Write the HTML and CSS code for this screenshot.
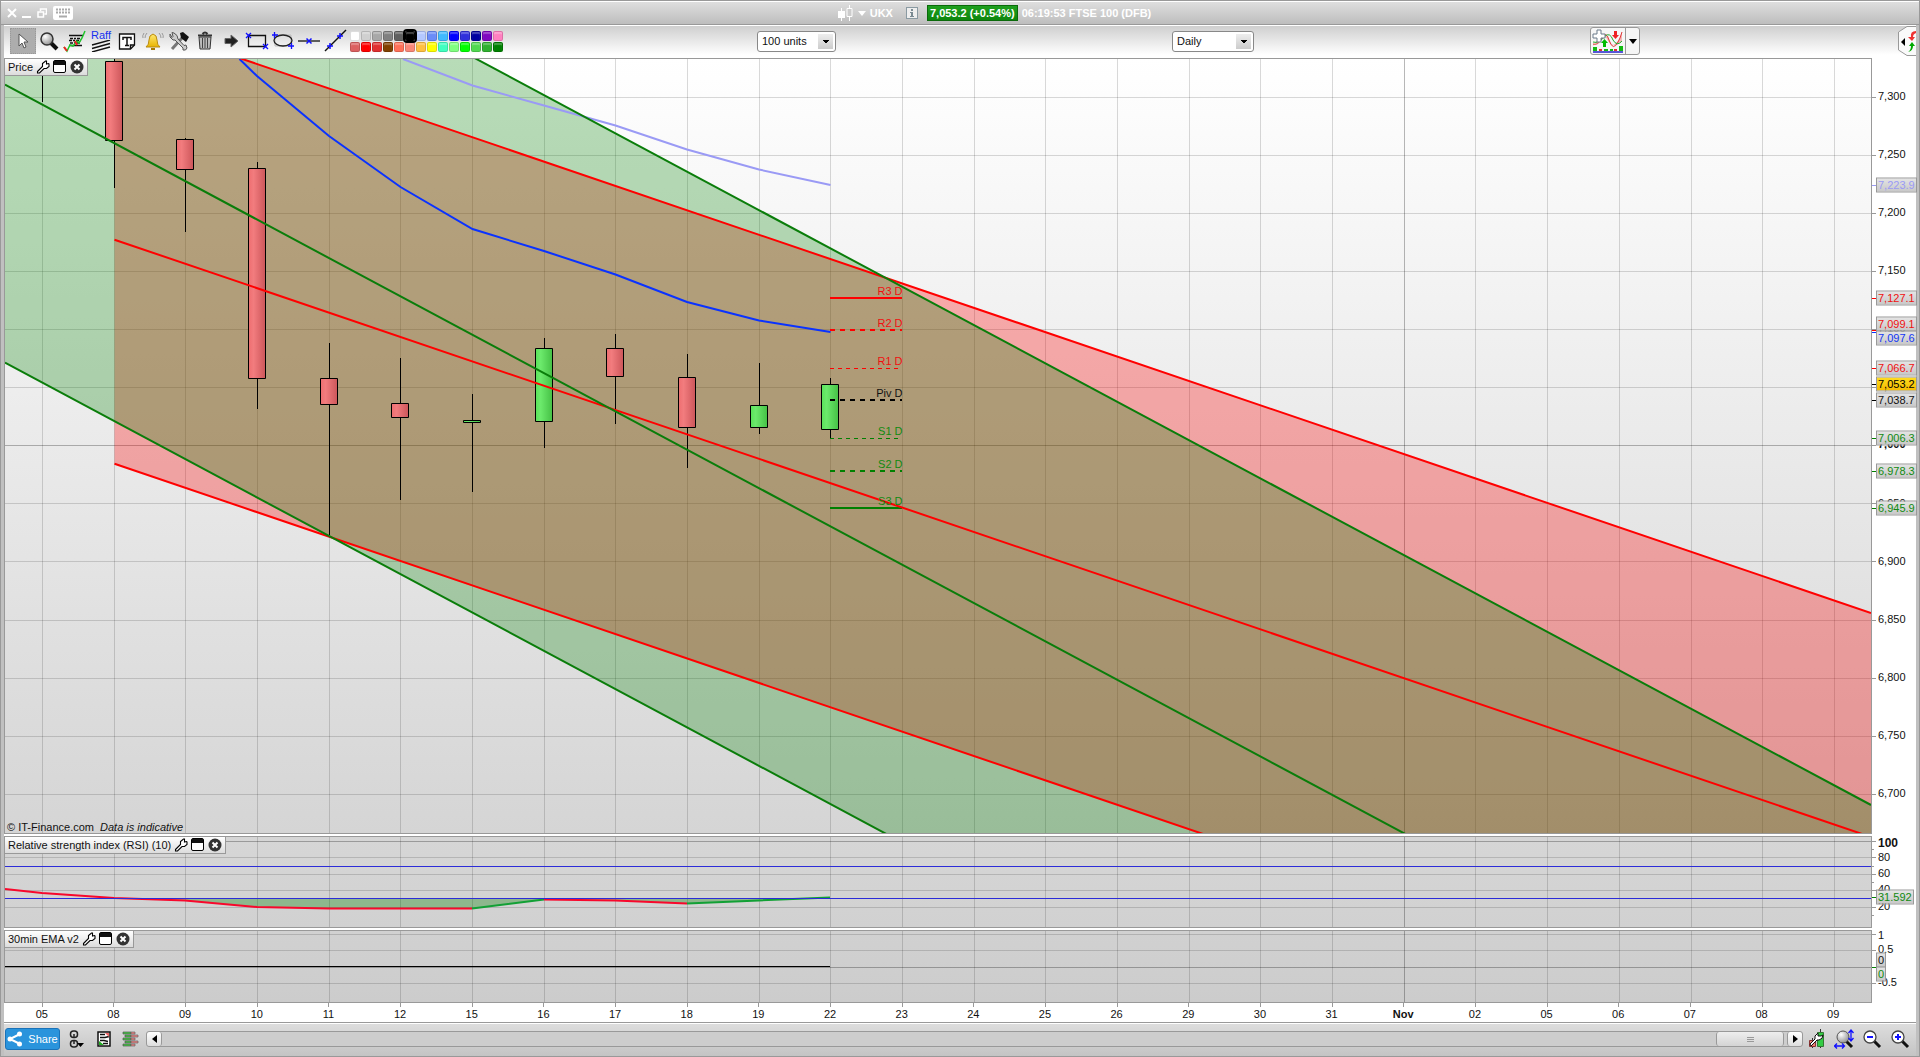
FILE: index.html
```html
<!DOCTYPE html>
<html lang="en">
<head>
<meta charset="utf-8">
<title>UKX - FTSE 100 (DFB)</title>
<link rel="stylesheet" href="styles.css">
</head>
<body>
<svg class="defs" aria-hidden="true">
  <symbol id="wrench" viewBox="0 0 14 14"><path d="M1.5 11.5 6.500 6.500V3.500L9.500 1h1v3l2-0.500.5.5v2.500L10.500 8.500H8L3.500 13H1.500z" fill="#fff" stroke="#000" stroke-width="1.100"/></symbol>
  <symbol id="window" viewBox="0 0 14 14"><rect x=".5" y=".5" width="12" height="12" rx="1.500" fill="#fff" stroke="#000"/><path d="M1 1h11v4H1z" fill="#111"/></symbol>
  <symbol id="close" viewBox="0 0 14 14"><circle cx="7" cy="7" r="6.500" fill="#333"/><path d="m4.500 4.500 5 5m0-5-5 5" stroke="#fff" stroke-width="2"/></symbol>
  <linearGradient id="up"><stop offset="0" stop-color="#58e258"/><stop offset=".3" stop-color="#6cea6c"/><stop offset="1" stop-color="#45c045"/></linearGradient>
  <linearGradient id="down"><stop offset="0" stop-color="#ee6e70"/><stop offset=".3" stop-color="#f27c7e"/><stop offset="1" stop-color="#cc565a"/></linearGradient>
  <linearGradient id="bell" x2="0" y2="1"><stop offset="0" stop-color="#ffe870"/><stop offset="1" stop-color="#e8b400"/></linearGradient>
  <radialGradient id="lens" cx=".35" cy=".3" r=".8"><stop offset="0" stop-color="#fff"/><stop offset="1" stop-color="#888"/></radialGradient>
</svg>

<header class="titlebar">
  <div class="window-buttons">
    <button aria-label="Close"><svg width="10" height="10"><path d="m1 1 8 8m0-8L1 9" stroke="#fff" stroke-width="2"/></svg></button>
    <button aria-label="Minimise"><svg width="10" height="10"><path d="M0 9h9" stroke="#fff" stroke-width="2"/></svg></button>
    <button aria-label="Restore"><svg width="10" height="10" fill="none" stroke="#fff" stroke-width="1.500"><path d="M3.500 3V1h6v5H7.500M1 4h5.500v5H1z"/></svg></button>
    <button class="keyboard" aria-label="Keyboard"><svg width="20" height="14"><rect width="20" height="14" rx="2" fill="#fff"/><path d="M3 3.500h14M3 6.500h14" stroke="#aaa" stroke-width="2" stroke-dasharray="2 1"/><path d="M6 10.500h8" stroke="#aaa" stroke-width="2"/></svg></button>
  </div>
  <div class="instrument">
    <svg width="17" height="16"><path d="M4.500 3v13M12.500 0v16" stroke="#fff"/><path d="M1 6h7v7H1z" fill="#fff"/><path d="M10 3.500h5v8h-5z" fill="#ccc" stroke="#fff"/></svg>
    <svg width="8" height="5"><path d="M0 0h8L4 5z" fill="#fff"/></svg>
    <span>UKX</span>
    <button class="info" aria-label="Instrument information"><svg width="12" height="12"><rect x=".5" y=".5" width="11" height="11" fill="#eee" stroke="#8a9aa2"/><path d="M5 2h2v2H5zM4 5h3v4h1v1H4V9h1V6H4z" fill="#7a8a92"/></svg></button>
    <strong class="quote">7,053.2 (+0.54%)</strong>
    <span>06:19:53 FTSE 100 (DFB)</span>
  </div>
</header>

<div class="toolbar">
  <div class="tools">
    <button class="pressed" aria-label="Pointer"><svg width="24" height="24"><path d="M8 5v12l3-3 2 5 2-1-2-5h4z" fill="#fff" stroke="#555"/></svg></button>
    <button aria-label="Zoom"><svg width="24" height="24"><path d="m14 14 6 6" stroke="#111" stroke-width="4"/><circle cx="10" cy="10" r="6" fill="url(#lens)" stroke="#333" stroke-width="1.500"/></svg></button>
    <button aria-label="Probability"><svg width="24" height="24"><path d="M6 6.500h14M6 16.500h13" stroke="#111" stroke-width="1.500"/><path d="M7 9.500h11M6 11.500h12M7 14h11" stroke="#111" stroke-width="1.500" stroke-dasharray="3 1 2 1"/><path d="m1 18 3 4 3-6 3 1 4-5 2 2 3-5 3-7" fill="none" stroke="#1fc62a" stroke-width="1.500"/><path d="m1 18 3 4M12 12l2 4" stroke="#e22" stroke-width="2"/></svg></button>
    <button class="raff" aria-label="Raff channel"><span>Raff</span><svg width="20" height="12"><path d="m1 5 18-5M1 8.500l18-5M1 12l18-5" stroke="#111" stroke-width="1.300"/></svg></button>
    <button aria-label="Text"><svg width="24" height="24"><path d="M4.500 5h15v11l-4 4h-11z" fill="#fff" stroke="#111" stroke-width="1.300"/><path d="M15.500 20v-4h4M8 11V8.500h8V11M12 8.500V16M10 16.500h4" fill="none" stroke="#111" stroke-width="1.500"/></svg></button>
    <button aria-label="Alert"><svg width="24" height="24"><path d="M5 18q3-2 3-7 0-5 4-6 4 1 4 6 0 5 3 7z" fill="url(#bell)" stroke="#b88a10"/><path d="M10 19h4v2h-4z" fill="#a87a00"/><path d="M6 4q-2 2-2 5M3 4Q1 7 2 9M18 4q2 2 2 5M21 4q2 3 1 5" fill="none" stroke="#999"/></svg></button>
    <button aria-label="Settings"><svg width="24" height="24"><path d="m5 20 10-11" stroke="#777" stroke-width="3"/><path d="m13 4 3-1 6 5-3 5-5-4z" fill="#111"/><path d="M3 5v3l3 3h2l8 8v2q3 1 4-2l-1-3-2 .5L11 10q0-4-4-6l-2-.5 1 4-1 1z" fill="#ccc" stroke="#555"/></svg></button>
    <button aria-label="Delete"><svg width="24" height="24"><path d="M6 8h12l-1 12H7z" fill="#bbb" stroke="#333"/><path d="M9.500 9v10M12 9v10M14.500 9v10" stroke="#444"/><path d="M5 6.500h14M9.500 5q2.500-3 5 0" fill="none" stroke="#333" stroke-width="2"/></svg></button>
    <button aria-label="Arrow"><svg width="24" height="24"><path d="M6 9.500h6V6l7 6-7 6v-3.500H6z" fill="#222" stroke="#666"/></svg></button>
    <button aria-label="Rectangle"><svg width="26" height="24"><path d="M4.500 6.500h17v11h-17z" fill="none" stroke="#111" stroke-width="1.300"/><path d="m2 4 5 5m0-5L2 9M19 15l5 5m0-5-5 5" stroke="#11f" stroke-width="1.300"/></svg></button>
    <button aria-label="Ellipse"><svg width="26" height="24"><path d="M5 6h16v11H5z" fill="none" stroke="#bbb"/><ellipse cx="13" cy="11.500" rx="9" ry="5.500" fill="none" stroke="#222" stroke-width="1.300"/><path d="M4.500 3v6M2 6h6M21.500 14v6M18 17h6" stroke="#11f" stroke-width="1.300"/></svg></button>
    <button aria-label="Horizontal line"><svg width="24" height="24"><path d="M1 12h22" stroke="#111" stroke-width="1.300"/><path d="m9.500 9.500 5 5m0-5-5 5" stroke="#11f" stroke-width="1.500"/></svg></button>
    <button aria-label="Trend line"><svg width="24" height="24"><path d="M2 22 23 1" stroke="#111" stroke-width="1.500"/><path d="M4 17h6M7 14v6M14 7h6M17 4v6" stroke="#11f" stroke-width="1.500"/></svg></button>
    <div class="palette">
      <button aria-label="White" class="swatch c1"></button><button aria-label="Light grey" class="swatch c2"></button><button aria-label="Silver" class="swatch c3"></button><button aria-label="Grey" class="swatch c4"></button><button aria-label="Dark grey" class="swatch c5"></button><button aria-label="Black" class="swatch c6 chosen"></button><button aria-label="Pale blue" class="swatch c7"></button><button aria-label="Cornflower" class="swatch c8"></button><button aria-label="Sky blue" class="swatch c9"></button><button aria-label="Blue" class="swatch c10"></button><button aria-label="Royal blue" class="swatch c11"></button><button aria-label="Navy" class="swatch c12"></button><button aria-label="Purple" class="swatch c13"></button><button aria-label="Pink" class="swatch c14"></button>
      <button aria-label="Rose" class="swatch c15"></button><button aria-label="Red" class="swatch c16"></button><button aria-label="Brick" class="swatch c17"></button><button aria-label="Brown" class="swatch c18"></button><button aria-label="Coral" class="swatch c19"></button><button aria-label="Salmon" class="swatch c20"></button><button aria-label="Orange" class="swatch c21"></button><button aria-label="Yellow" class="swatch c22"></button><button aria-label="Aqua" class="swatch c23"></button><button aria-label="Mint" class="swatch c24"></button><button aria-label="Lime" class="swatch c25"></button><button aria-label="Light green" class="swatch c26"></button><button aria-label="Mid green" class="swatch c27"></button><button aria-label="Green" class="swatch c28"></button>
    </div>
  </div>
  <div><select class="units" aria-label="Units shown"><option>100 units</option></select></div>
  <div><select class="period" aria-label="Period"><option>Daily</option></select></div>
  <div class="indicators">
    <button aria-label="Add indicator"><svg width="32" height="24"><path d="M1 15q5 1 9-7 4-6 7 2 3 9 7 4 4-3 6-12v10q-5 5-8 4-4 1-7-6-4-8-14 7z" fill="#f3b8b8"/><path d="M1 15q5 2 9-6 4-8 7 2 4 12 9 2 2-3 4-10" fill="none" stroke="#e03a3a"/><path d="M1 13q6 2 12-6 5-4 8 4 4 7 9 1" fill="none" stroke="#1faa2a"/><path d="M5 1h4v4h4v4H9v4H5V9H1V5h4z" fill="#fff" stroke="#6a7a8a"/><path d="M22 2h3v4h2l-3.500 4L20 6h2z" fill="#e22"/><path d="M11 18h3v-4h2l-3.500-4L9 14h2z" fill="#0b0"/><path d="M1 18h4v4H1zM12 20h4v2h-4zM18 20h3v2h-3zM27 17h4v5h-4z" fill="#1b1"/><path d="M7 20h3v2H7zM22 20h3v2h-3z" fill="#d33"/><path d="M1 23h30" stroke="#22c" stroke-width="1.500"/></svg></button>
    <button class="more" aria-label="Indicator list"><svg width="8" height="5"><path d="M0 0h8L4 5z"/></svg></button>
  </div>
  <button class="side-tab" aria-label="Open order panel"><svg width="18" height="30"><path d="M18 .5H9L.5 6v18L9 29.500h9" fill="#fafafa" stroke="#999"/><path d="M3 16l4-4v8z"/><path d="M18 5q-6 0-5 6h-3l4 4 3-4h-2q0-3 3-4z" fill="#e33"/><path d="M10 26q3-2 3-6h-2l3-4 3 4h-2q0 5-5 6z" fill="#0a0"/></svg></button>
</div>

<main class="charts">
  <section class="plot price">
    <svg class="canvas" viewBox="5 59 1866 774" preserveAspectRatio="none">
      <path class="grid" d="M42.500 59v774M114.500 59v774M185.500 59v774M257.500 59v774M329.500 59v774M400.500 59v774M472.500 59v774M544.500 59v774M615.500 59v774M687.500 59v774M759.500 59v774M830.500 59v774M902.500 59v774M974.500 59v774M1045.500 59v774M1117.500 59v774M1189.500 59v774M1260.500 59v774M1332.500 59v774M1475.500 59v774M1547.500 59v774M1619.500 59v774M1691.500 59v774M1762.500 59v774M1834.500 59v774M5 97.500h1866M5 155.500h1866M5 213.500h1866M5 271.500h1866M5 329.500h1866M5 387.500h1866M5 503.500h1866M5 561.500h1866M5 620.500h1866M5 678.500h1866M5 736.500h1866M5 794.500h1866"/>
      <path class="grid strong" d="M1404.500 59v774M5 445.500h1866"/>
      <path d="M114.500 15.500 1871 613v224L1871 837H1212L114.500 463.700z" fill="#f00" fill-opacity=".3"/>
      <path d="M5-193.200 1871 805v40H907L5 362.700z" fill="#008000" fill-opacity=".28"/>
      <g class="line">
        <path d="M403 59 472.500 85.500 544 105.500 615.500 125.500 687 149.500 759 169.500 830.500 185" stroke="#9a9af5"/>
        <path d="M239.500 59 257 76 329 136 400.500 187 472.500 229 544 251 615.500 274.500 687 302 759 320.500 830.500 332" stroke="#0a32ff"/>
      </g>
      <path class="wick" d="M42.500 59v43M114.500 59v129M185.500 138v94M257.500 162v247M329.500 343v192M400.500 358v142M472.500 394v98M544.500 338v110M615.500 334v90M687.500 354v114M759.500 363v71M830.500 378v60"/>
      <g class="candle" fill="url(#down)">
        <rect x="105.500" y="61.500" width="17" height="79"/><rect x="176.500" y="139.500" width="17" height="30"/><rect x="248.500" y="168.500" width="17" height="210"/><rect x="320.500" y="378.500" width="17" height="26"/><rect x="391.500" y="403.500" width="17" height="14"/><rect x="606.500" y="348.500" width="17" height="28"/><rect x="678.500" y="377.500" width="17" height="50"/>
      </g>
      <g class="candle" fill="url(#up)">
        <rect x="463.500" y="420.500" width="17" height="2"/><rect x="535.500" y="348.500" width="17" height="73"/><rect x="750.500" y="405.500" width="17" height="22"/><rect x="821.500" y="384.500" width="17" height="45"/>
      </g>
      <g class="line">
        <path d="M830 298h72" stroke="red"/><path d="M830 330h72" stroke="red" stroke-dasharray="5 5"/>
        <path d="M830 400h72" stroke="#000" stroke-dasharray="5 5"/><path d="M830 471h72" stroke="green" stroke-dasharray="5 5"/><path d="M830 508h72" stroke="green"/>
        <path class="thin" d="M830 368.500h72" stroke="red" stroke-dasharray="4 4"/><path class="thin" d="M830 438.500h72" stroke="green" stroke-dasharray="4 4"/>
        <path d="M114.500 15.500 1871 613M114.500 239.700 1871 837M114.500 463.700 1212 837" stroke="red"/>
        <path d="M5-193.200 1871 805M5 84.700 1411 837M5 362.700 892 837" stroke="#0a7d0a"/>
      </g>
    </svg>
    <h2 class="caption">Price <button aria-label="Price settings"><svg width="14" height="14"><use href="#wrench"/></svg></button><button aria-label="Maximise Price"><svg width="14" height="14"><use href="#window"/></svg></button><button aria-label="Close Price"><svg width="14" height="14"><use href="#close"/></svg></button></h2>
    <span class="pivot red" style="top:29.97%">R3 D</span>
    <span class="pivot red" style="top:34.11%">R2 D</span>
    <span class="pivot red" style="top:39.02%">R1 D</span>
    <span class="pivot" style="top:43.15%">Piv D</span>
    <span class="pivot green" style="top:48.06%">S1 D</span>
    <span class="pivot green" style="top:52.33%">S2 D</span>
    <span class="pivot green" style="top:57.11%">S3 D</span>
    <p class="credit">© IT-Finance.com <em>Data is indicative</em></p>
  </section>
  <div class="axis price-axis">
    <svg class="ticks" viewBox="0 59 4 774" preserveAspectRatio="none">
      <path d="M0 97.500h4M0 155.500h4M0 213.500h4M0 271.500h4M0 329.500h4M0 387.500h4M0 445.500h4M0 503.500h4M0 561.500h4M0 620.500h4M0 678.500h4M0 736.500h4M0 794.500h4" stroke="#999"/>
      <path d="M0 185.500h4" stroke="#9a9af5"/><path d="M0 298.500h4M0 330.500h4M0 368.500h4" stroke="red"/><path d="M0 332.500h4" stroke="#0a32ff"/><path d="M0 384.500h4M0 400.500h4" stroke="#000"/><path d="M0 438.500h4M0 471.500h4M0 508.500h4" stroke="green"/>
    </svg>
    <span></span><span>7,300</span><span>7,250</span><span>7,200</span><span>7,150</span><span>7,100</span><span>7,050</span><b>7,000</b><span>6,950</span><span>6,900</span><span>6,850</span><span>6,800</span><span>6,750</span><span>6,700</span>
    <span class="tag lilac" style="top:16.28%">7,223.9</span>
    <span class="tag red" style="top:30.88%">7,127.1</span>
    <span class="tag red" style="top:34.24%">7,099.1</span>
    <span class="tag blue" style="top:36.05%">7,097.6</span>
    <span class="tag red" style="top:39.92%">7,066.7</span>
    <span class="tag" style="top:44.06%">7,038.7</span>
    <span class="tag last" style="top:42.05%">7,053.2</span>
    <span class="tag green" style="top:49.03%">7,006.3</span>
    <span class="tag green" style="top:53.23%">6,978.3</span>
    <span class="tag green" style="top:58.01%">6,945.9</span>
  </div>

  <section class="plot rsi">
    <svg class="canvas" viewBox="5 837 1866 90" preserveAspectRatio="none">
      <path class="grid" d="M42.500 837v90M114.500 837v90M185.500 837v90M257.500 837v90M329.500 837v90M400.500 837v90M472.500 837v90M544.500 837v90M615.500 837v90M687.500 837v90M759.500 837v90M830.500 837v90M902.500 837v90M974.500 837v90M1045.500 837v90M1117.500 837v90M1189.500 837v90M1260.500 837v90M1332.500 837v90M1475.500 837v90M1547.500 837v90M1619.500 837v90M1691.500 837v90M1762.500 837v90M1834.500 837v90M5 857.500h1866M5 874.500h1866M5 890.500h1866M5 907.500h1866"/>
      <path class="grid strong" d="M1404.500 837v90M5 841.500h1866"/>
      <path d="M114 898.500 185 900.500 257 907 329 908.500H472L544 899.500 615 900.500 687 903.500 759 900.500 800 898.500z" fill="green" fill-opacity=".33"/>
      <g class="line"><path d="M5 889 42 893 114 898 185 900.500 257 907 329 908.500H472M544 899.500 615 900.500 687 903.500" stroke="#f8082c"/><path d="M472 908.500 544 899.500M687 903.500 759 900.500 830 897.500" stroke="#12a035"/></g>
      <path class="line thin" d="M5 866.500h1866M5 898.500h1866" stroke="#2c2cd8"/>
    </svg>
    <h2 class="caption">Relative strength index (RSI) (10) <button aria-label="RSI settings"><svg width="14" height="14"><use href="#wrench"/></svg></button><button aria-label="Maximise RSI"><svg width="14" height="14"><use href="#window"/></svg></button><button aria-label="Close RSI"><svg width="14" height="14"><use href="#close"/></svg></button></h2>
  </section>
  <div class="axis rsi-axis">
    <svg class="ticks" viewBox="0 837 4 90" preserveAspectRatio="none"><path d="M0 841.500h4M0 849.500h2M0 857.500h4M0 866.500h2M0 874.500h4M0 882.500h2M0 890.500h4M0 907.500h4M0 915.500h2" stroke="#999"/><path d="M0 897.500h4" stroke="green"/></svg>
    <b class="hundred">100</b><span>80</span><span>60</span><span>40</span><span>20</span>
    <span class="tag green" style="top:67.2%">31.592</span>
  </div>

  <section class="plot ema">
    <svg class="canvas" viewBox="5 931 1866 71" preserveAspectRatio="none">
      <path class="grid" d="M42.500 931v71M114.500 931v71M185.500 931v71M257.500 931v71M329.500 931v71M400.500 931v71M472.500 931v71M544.500 931v71M615.500 931v71M687.500 931v71M759.500 931v71M830.500 931v71M902.500 931v71M974.500 931v71M1045.500 931v71M1117.500 931v71M1189.500 931v71M1260.500 931v71M1332.500 931v71M1475.500 931v71M1547.500 931v71M1619.500 931v71M1691.500 931v71M1762.500 931v71M1834.500 931v71M5 934.500h1866M5 950.500h1866M5 983.500h1866"/>
      <path class="grid strong" d="M1404.500 931v71M5 967.500h1866"/>
      <path class="line thin" d="M5 966.500h825" stroke="#000"/>
    </svg>
    <h2 class="caption">30min EMA v2 <button aria-label="EMA settings"><svg width="14" height="14"><use href="#wrench"/></svg></button><button aria-label="Maximise EMA"><svg width="14" height="14"><use href="#window"/></svg></button><button aria-label="Close EMA"><svg width="14" height="14"><use href="#close"/></svg></button></h2>
  </section>
  <div class="axis ema-axis">
    <svg class="ticks" viewBox="0 931 4 71" preserveAspectRatio="none"><path d="M0 934.500h4M0 950.500h4M0 983.500h4" stroke="#999"/><path d="M0 967.500h4" stroke="green"/></svg>
    <span>1</span><span>0.5</span><span></span><span>-0.5</span>
    <span class="tag" style="top:40.8%">0</span>
    <span class="tag green" style="top:61%">0</span>
  </div>
</main>

<div class="dates"><span>05</span><span>08</span><span>09</span><span>10</span><span>11</span><span>12</span><span>15</span><span>16</span><span>17</span><span>18</span><span>19</span><span>22</span><span>23</span><span>24</span><span>25</span><span>26</span><span>29</span><span>30</span><span>31</span><b>Nov</b><span>02</span><span>05</span><span>06</span><span>07</span><span>08</span><span>09</span></div>

<footer class="bottombar">
  <button class="share"><svg width="16" height="16"><path d="M13 3 3 8l10 5" fill="none" stroke="#fff" stroke-width="2"/><circle cx="3" cy="8" r="2.500" fill="#fff"/><circle cx="12.500" cy="3" r="2.500" fill="#fff"/><circle cx="12.500" cy="13" r="2.500" fill="#fff"/></svg>Share</button>
  <button class="tool" aria-label="Link charts"><svg width="16" height="18"><g fill="none" stroke="#222" stroke-width="1.500"><rect x="1.500" y="1" width="7" height="6.500" rx="3"/><rect x="1.500" y="10.500" width="7" height="6.500" rx="3"/><path d="M5 4v4M5 10v4"/></g><path d="M8 13h7l-3.500 4z"/></svg></button>
  <button class="tool" aria-label="Report"><svg width="14" height="16"><path d="M1 1h12v14H1z" fill="#fff" stroke="#111" stroke-width="1.500"/><path d="M3 3.500h5M3 6.500h5l4-1M3 9.500h4l4 1M6 12.500h5" fill="none" stroke="#111" stroke-width="1.500"/><path d="M8 2h4v4z" fill="#e66"/><path d="M2 10v4h5z" fill="#2a2"/></svg></button>
  <button class="tool" aria-label="Order book"><svg width="17" height="16"><path d="M1 1h8v2H1zM3 4h6v2H3zM1 7h8v2H1zM3 10h6v2H3zM1 13h8v2H1z" fill="#4c4" stroke="#555" stroke-width=".7"/><path d="M9 1h4v2H9zM9 4h7v2H9zM9 7h4v2H9zM9 10h7v2H9zM9 13h4v2H9z" fill="#f08080" stroke="#666" stroke-width=".7"/></svg></button>
  <div class="scroll">
    <button class="step" aria-label="Scroll left"><svg width="5" height="8"><path d="M5 0v8L0 4z"/></svg></button>
    <div class="track"><button class="thumb" aria-label="Scroll position"><svg width="7" height="7"><path d="M0 1.500h7M0 3.500h7M0 5.500h7" stroke="#999"/></svg></button></div>
    <button class="step" aria-label="Scroll right"><svg width="5" height="8"><path d="M0 0v8l5-4z"/></svg></button>
  </div>
  <div class="zooms">
    <button aria-label="Chart settings"><svg width="18" height="20"><path d="M4.500 9v10M12.500 0v19" stroke="#333"/><path d="M1.500 11.500h6v6h-6z" fill="#f08070" stroke="#833"/><path d="M9.500 3.500h6v14h-6z" fill="#3c4" stroke="#373"/><path d="M2 15 7 10V7l3-3v3h3l2-1q0 4-4 5H9l-6 6z" fill="#fff" stroke="#111"/></svg></button>
    <button aria-label="Fit"><svg width="20" height="20"><path d="m12 12 6 6" stroke="#111" stroke-width="3"/><circle cx="9" cy="8" r="6" fill="url(#lens)" stroke="#555"/><path d="M17 2v9M14.500 4 17 1l2.500 3M14.500 9l2.500 3 2.500-3M1 17h9M3 14.500.500 17 3 19.500M8 14.500l2.500 2.500L8 19.500" fill="none" stroke="#11f" stroke-width="1.300"/></svg></button>
    <button aria-label="Zoom out"><svg width="20" height="20"><path d="m11 11 7 7" stroke="#111" stroke-width="3"/><circle cx="8" cy="8" r="6" fill="#fff" stroke="#444" stroke-width="1.300"/><path d="M5 8h6" stroke="#11f" stroke-width="2"/></svg></button>
    <button aria-label="Zoom in"><svg width="20" height="20"><path d="m11 11 7 7" stroke="#111" stroke-width="3"/><circle cx="8" cy="8" r="6" fill="#fff" stroke="#444" stroke-width="1.300"/><path d="M5 8h6M8 5v6" stroke="#11f" stroke-width="2"/></svg></button>
  </div>
</footer>
</body>
</html>
```
FILE: styles.css
```css
* { box-sizing: border-box; }
body {
  margin: 0;
  height: 100vh;
  min-height: 500px;
  display: flex;
  flex-direction: column;
  overflow: hidden;
  padding: 0 3px;
  border: 1px solid #999;
  background: #c0c0c0;
  font: 11px/16px "Liberation Sans", Arial, sans-serif;
  color: #111;
}
button { padding: 0; border: 0; background: none; font: inherit; color: inherit; display: flex; align-items: center; justify-content: center; }
svg { display: block; flex: none; }
.defs { position: absolute; width: 0; height: 0; }
.red { color: #f01010; }
.green { color: #108a10; }
.blue { color: #1236f5; }
.lilac { color: #9a9af5; }

/* title bar */
.titlebar {
  height: 24px;
  flex: none;
  margin: 0 -3px;
  position: relative;
  display: flex;
  align-items: center;
  justify-content: center;
  border-top: 1px solid #fff;
  border-bottom: 1px solid #999;
  background: linear-gradient(#dedede, #bdbdbd);
}
.window-buttons { position: absolute; left: 6px; top: 4px; display: flex; align-items: center; gap: 5px; }
.keyboard { margin-left: 1px; }
.instrument { display: flex; align-items: center; gap: 4px; margin-left: 68px; font-weight: bold; color: #fff; }
.info { margin: 0 5px 0 9px; }
.quote { padding: 0 2px; line-height: 14px; border: 1px solid #0a6a0a; background: linear-gradient(#1fa01f, #0d860d); }

/* toolbar */
.toolbar {
  height: 33px;
  flex: none;
  display: grid;
  grid-template-columns: 753fr 415fr 418fr 308fr 18px;
  align-items: center;
  padding-bottom: 2px;
  border-top: 1px solid #fff;
  background: linear-gradient(#cfcfcf, #fff 90%);
}
.tools { display: flex; align-items: center; padding-left: 6px; }
.tools > button { width: 26px; height: 26px; flex: none; }
.tools > .pressed { background: #adadad; border: 1px dotted #999; }
.tools > .raff { flex-direction: column; color: #1530f0; line-height: 10px; }
.palette { display: grid; grid-template-columns: repeat(14, 10px); gap: 1px; margin-left: 2px; }
.swatch { height: 10px; border-radius: 2px; border: 1px solid #0002; box-shadow: inset 0 2px 1px #fff4; }
.chosen { outline: 2px solid #000; outline-offset: 0; z-index: 1; }
.c1 { background: #fff; } .c2 { background: #d0d0d0; } .c3 { background: #a8a8a8; } .c4 { background: #808080; }
.c5 { background: #606060; } .c6 { background: #000; } .c7 { background: #b4c8ff; } .c8 { background: #6a8cf8; }
.c9 { background: #40baff; } .c10 { background: #0000ff; } .c11 { background: #3030dc; } .c12 { background: #0000a0; }
.c13 { background: #8008c0; } .c14 { background: #ff80c0; } .c15 { background: #dc6060; } .c16 { background: #ff0000; }
.c17 { background: #e03030; } .c18 { background: #804000; } .c19 { background: #ff7058; } .c20 { background: #fa8878; }
.c21 { background: #ffc040; } .c22 { background: #ffff00; } .c23 { background: #40ffc0; } .c24 { background: #80ff80; }
.c25 { background: #00ff00; } .c26 { background: #50d850; } .c27 { background: #30b030; } .c28 { background: #008000; }
select {
  appearance: none;
  display: block;
  height: 21px;
  padding: 0 4px;
  border: 1px solid #888;
  border-radius: 3px;
  font: inherit;
  color: #111;
  background:
    linear-gradient(#000, #000) right 6px top 8px / 6px 1px no-repeat,
    linear-gradient(#000, #000) right 7px top 9px / 4px 1px no-repeat,
    linear-gradient(#000, #000) right 8px top 10px / 2px 1px no-repeat,
    linear-gradient(#eee, #ccc) right 2px center / 15px 15px no-repeat,
    #fff;
}
.units { width: 79px; }
.period { width: 82px; }
.indicators { display: flex; width: 50px; height: 28px; border: 1px solid #999; border-radius: 3px; background: #f6f6f6; }
.indicators button { width: 34px; }
.indicators .more { width: 14px; border-left: 1px solid #999; }

/* charts */
.charts {
  flex: 1;
  min-height: 0;
  display: grid;
  grid-template-columns: 1fr 44px;
  grid-template-rows: minmax(0, 776fr) minmax(0, 92fr) minmax(0, 73fr);
  row-gap: 2px;
  background: #fff;
}
.plot { position: relative; border: 1px solid #999; min-width: 0; min-height: 0; }
.price { background: linear-gradient(#fff, #d5d5d5); }
.rsi { background: linear-gradient(#d6d6d6, #d1d1d1); }
.ema { background: linear-gradient(#d1d1d1, #cccccc); }
.canvas { position: absolute; inset: 0; width: 100%; height: 100%; }
.canvas * { vector-effect: non-scaling-stroke; }
.grid { stroke: #000; stroke-opacity: .15; fill: none; }
.strong { stroke-opacity: .28; }
.line, .line path { fill: none; stroke-width: 2; }
.canvas .thin { stroke-width: 1; }
.wick, .candle { stroke: #000; }
.caption {
  position: absolute;
  left: 0;
  top: 0;
  margin: 0;
  height: 17px;
  padding: 0 3px 1px;
  display: flex;
  align-items: center;
  gap: 3px;
  border: solid #999;
  border-width: 0 1px 1px 0;
  background: linear-gradient(#fff, #dcdcdc);
  font-size: 11px;
  line-height: 14px;
  font-weight: normal;
  white-space: nowrap;
}
.pivot { position: absolute; right: 51.9%; transform: translateY(-50%); }
.credit { position: absolute; left: 2px; bottom: -2px; margin: 0; }
.credit em { margin-left: 3px; }

/* value axes */
.axis { position: relative; border: solid transparent; border-width: 1px 0; padding-left: 6px; display: grid; min-height: 0; align-items: center; }
.ticks { position: absolute; left: 0; top: 0; width: 4px; height: 100%; }
.price-axis { grid-template-rows: 8fr repeat(13, 58fr) 11fr; }
.rsi-axis { grid-template-rows: minmax(0, 12fr) repeat(3, minmax(0, 16fr)) minmax(0, 17fr) minmax(0, 13fr); }
.ema-axis { grid-template-rows: minmax(0, 8fr) minmax(0, 20fr) minmax(0, 14fr) minmax(0, 18fr) minmax(0, 11fr); }
.rsi-axis > span, .rsi-axis > b, .ema-axis > span { line-height: 12px; }
.axis b { font-size: 11px; }
.axis .hundred { font-size: 12px; }
.axis .tag {
  position: absolute;
  left: 4px;
  transform: translateY(-50%);
  padding: 0 1px;
  line-height: 13px;
  border: 1px solid #999;
  background: linear-gradient(#e4e4e4, #c8c8c8);
}
.axis .last { background: linear-gradient(#ffdc20, #f5bb00); color: #000; }

/* date axis */
.dates { height: 19px; flex: none; padding: 3px 47px 0 2px; display: grid; grid-template-columns: repeat(26, 1fr); text-align: center; background: #fff; }
.dates > * { position: relative; }
.dates > ::before { content: ""; position: absolute; left: 50%; top: -3px; height: 4px; border-left: 1px solid #999; }

/* bottom bar */
.bottombar {
  height: 34px;
  flex: none;
  display: flex;
  align-items: center;
  padding: 0 6px 1px 1px;
  border-top: 1px solid #999;
  box-shadow: inset 0 1px #fff;
  background: linear-gradient(#dedede, #c4c4c4);
}
.share { width: 55px; height: 22px; gap: 5px; border: 1px solid #1a72b8; border-radius: 3px; background: #2a94dc; color: #fff; }
.tool { width: 27px; height: 22px; }
.tool:nth-of-type(2) { margin-left: 3px; }
.scroll { flex: 1; display: flex; height: 16px; margin-left: 2px; border: 1px solid #999; border-radius: 3px; background: #cdcdcd; }
.step { width: 15px; border: solid #999; border-width: 0; background: linear-gradient(#fff, #ddd); border-radius: 3px; }
.step:first-child { border-right-width: 1px; }
.step:last-child { border-left-width: 1px; }
.track { flex: 1; display: flex; justify-content: flex-end; padding-right: 3px; }
.thumb { width: 68px; border: solid #999; border-width: 0 1px; border-radius: 3px; background: linear-gradient(#eee, #d4d4d4); }
.zooms { display: flex; gap: 8px; margin-left: 5px; }
```
